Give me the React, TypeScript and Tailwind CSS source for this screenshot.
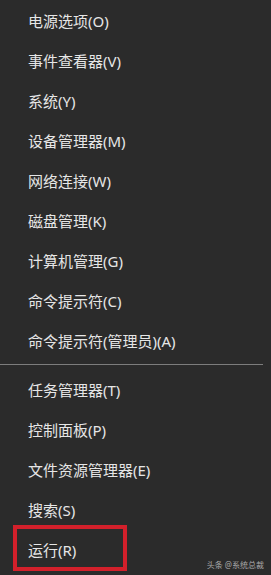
import React from "react";

const group1 = [
  "电源选项(O)",
  "事件查看器(V)",
  "系统(Y)",
  "设备管理器(M)",
  "网络连接(W)",
  "磁盘管理(K)",
  "计算机管理(G)",
  "命令提示符(C)",
  "命令提示符(管理员)(A)",
];
const group2 = ["任务管理器(T)", "控制面板(P)", "文件资源管理器(E)", "搜索(S)"];

const font = { fontFamily: '"Noto Sans", "Noto Sans CJK SC", sans-serif' };

function Row({ label }: { label: string }) {
  return (
    <div className="h-[40px] flex items-center pl-[28px] text-[15px] text-[#e6e6e6] leading-none">
      {label}
    </div>
  );
}

export default function App() {
  return (
    <div className="relative w-[271px] h-[575px] bg-[#2b2b2b] overflow-hidden" style={font}>
      <div className="flex flex-col pt-[1px]">
        {group1.map((l) => (
          <Row key={l} label={l} />
        ))}
        <div className="mt-[3px] mb-[5px] h-px w-[263px] bg-[#7d7d7d]" />
        {group2.map((l) => (
          <Row key={l} label={l} />
        ))}
        <div className="relative">
          <Row label="运行(R)" />
          <div className="absolute left-[13px] top-[-5px] w-[114px] h-[46px] border-[4px] border-[#d3202b]" />
        </div>
      </div>
      <div className="absolute right-[7px] bottom-[6px] text-[8px] text-[#a8a8a8] leading-none">
        头条 @系统总裁
      </div>
    </div>
  );
}
